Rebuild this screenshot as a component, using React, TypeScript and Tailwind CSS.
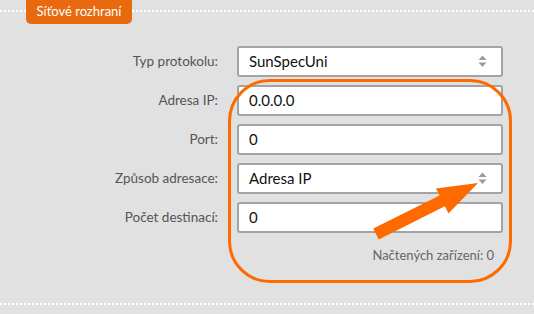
import React from 'react';

const Caret: React.FC = () => (
  <svg width="9" height="13" viewBox="0 0 9 13" className="shrink-0">
    <path d="M4.5 0.5 L8.5 5 L0.5 5 Z" fill="#9a9a9a" />
    <path d="M0.5 7.5 L8.5 7.5 L4.5 12 Z" fill="#9a9a9a" />
  </svg>
);

interface RowProps {
  label: string;
  value: string;
  select?: boolean;
}

const Row: React.FC<RowProps> = ({ label, value, select }) => (
  <div className="flex items-center">
    <div className="w-[218px] text-right text-[13.5px] text-[#555]">{label}</div>
    <div className="ml-[19px] w-[266px] h-[31px] flex items-center justify-between bg-white border-2 border-[#a3a3a3] rounded-[3px] pl-[10px] pr-[14px] text-[15px] text-[#111]">
      <span>{value}</span>
      {select && <Caret />}
    </div>
  </div>
);

export default function App() {
  return (
    <div
      className="relative w-[534px] h-[314px] bg-[#e1e1e1] overflow-hidden"
      style={{ fontFamily: 'Lato, "Open Sans", sans-serif' }}
    >
      {/* hlavička sekce */}
      <div className="mt-[10px] border-t-2 border-dotted border-white">
        <div className="-mt-[12px] ml-[26px] w-[106px] h-[24px] bg-[#e8690e] rounded-b-[5px] flex items-center justify-center text-white text-[13px]">
          Síťové rozhraní
        </div>
      </div>

      <div className="mt-[22px] flex flex-col gap-[8px]">
        <Row label="Typ protokolu:" value="SunSpecUni" select />
        <Row label="Adresa IP:" value="0.0.0.0" />
        <Row label="Port:" value="0" />
        <Row label="Způsob adresace:" value="Adresa IP" select />
        <Row label="Počet destinací:" value="0" />
      </div>

      <div className="mt-[13px] pr-[40px] text-right text-[13px] text-[#666]">Načtených zařízení: 0</div>

      <div className="mt-[37px] border-t-2 border-dotted border-white" />

      {/* anotace */}
      <div className="absolute left-[228px] top-[79px] w-[284px] h-[204px] border-[3px] border-[#ff6a00] rounded-[42px]" />
      <svg className="absolute left-0 top-0" width="534" height="314" viewBox="0 0 534 314">
        <polygon
          points="373.3,228.6 439.5,195.5 435.9,188.4 478,183 448.5,213.4 444.9,206.3 378.7,239.4"
          fill="#ff6a00"
        />
      </svg>
    </div>
  );
}
